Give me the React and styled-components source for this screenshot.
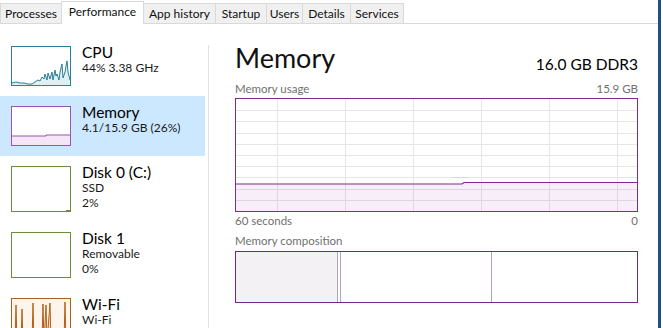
import React from "react";
import styled, { createGlobalStyle } from "styled-components";

const Global = createGlobalStyle`
  html, body { margin: 0; padding: 0; background: #fff; overflow: hidden; }
  body { font-family: Lato, "Noto Sans", "Liberation Sans", sans-serif; color: #000; }
  * { box-sizing: border-box; }
`;

const Window = styled.div`
  display: flex;
  width: 663px;
  height: 328px;
  overflow: hidden;
  background: #fff;
`;

const Main = styled.div`
  display: flex;
  flex-direction: column;
  width: 658px;
  flex-shrink: 0;
`;

const EdgeBar = styled.div`
  width: 3px;
  flex-shrink: 0;
  background: #1d4f8b;
`;

const TabBar = styled.div`
  display: flex;
  align-items: flex-end;
  height: 24px;
  border-bottom: 1px solid #d9d9d9;
  flex-shrink: 0;
`;

const Tab = styled.div`
  position: relative;
  z-index: ${(p) => (p.$active ? 1 : 0)};
  width: ${(p) => p.$w}px;
  height: ${(p) => (p.$active ? 23 : 20)}px;
  margin-right: -1px;
  margin-bottom: ${(p) => (p.$active ? -1 : 0)}px;
  padding-top: 2px;
  border: 1px solid #d9d9d9;
  border-bottom: none;
  background: ${(p) => (p.$active ? "#fff" : "#f0f0f0")};
  font-size: 12px;
  line-height: 15px;
  text-align: center;
  white-space: nowrap;
  color: #111;
`;

const Body = styled.div`
  display: flex;
  flex: 1;
  min-height: 0;
`;

const Sidebar = styled.div`
  width: 205px;
  flex-shrink: 0;
  margin-right: 3px;
  padding-top: 12px;
`;

const Divider = styled.div`
  width: 1px;
  flex-shrink: 0;
  margin-top: 21px;
  background: #e2e2e2;
`;

const Item = styled.div`
  display: flex;
  align-items: flex-start;
  gap: 11px;
  padding: 10px 0 10px 11px;
  background: ${(p) => (p.$selected ? "#cce8ff" : "transparent")};
`;

const Thumb = styled.div`
  width: 60px;
  height: ${(p) => p.$h}px;
  flex-shrink: 0;
  border: 1px solid ${(p) => p.$color};
  background: #fff;
  svg { display: block; }
`;

const ItemText = styled.div`
  display: flex;
  flex-direction: column;
  margin-top: -3.5px;
`;

const ItemTitle = styled.div`
  font-size: 15.5px;
  line-height: 18.7px;
  color: #000;
`;

const ItemSub = styled.div`
  font-size: 12px;
  line-height: 14.5px;
  color: #1a1a1a;
`;

const Detail = styled.div`
  flex: 1;
  min-width: 0;
  padding: 18px 20px 0 26px;
  display: flex;
  flex-direction: column;
`;

const Header = styled.div`
  display: flex;
  justify-content: space-between;
  align-items: flex-end;
  height: 32px;
`;

const BigTitle = styled.div`
  font-size: 27px;
  line-height: 32px;
  font-weight: 400;
  color: #111;
`;

const Spec = styled.div`
  font-size: 15.5px;
  line-height: 20px;
  color: #000;
`;

const LabelRow = styled.div`
  display: flex;
  justify-content: space-between;
  font-size: 11.5px;
  line-height: 15px;
  color: #707070;
  margin-top: ${(p) => p.$mt}px;
`;

const Graph = styled.div`
  margin-top: 2px;
  height: 114px;
  border: 1px solid #7d2a92;
  svg { display: block; }
`;

const Composition = styled.div`
  margin-top: 3px;
  height: 52px;
  display: flex;
  border: 1px solid #6e2a80;
`;

const Segment = styled.div`
  width: ${(p) => p.$w}px;
  flex: ${(p) => (p.$grow ? 1 : "none")};
  background: ${(p) => p.$bg || "#fff"};
  border-right: ${(p) => (p.$edge ? "1px solid #b3a2b8" : "none")};
`;

const cpuPts =
  "0,36 4,35 8,36 12,36 16,37 20,37 23,35 26,33 28,34 30,30 32,32 33,27 35,33 36,26 38,32 40,25 41,33 43,23 44,29 45,27 47,33 48,25 50,17 51,31 53,25 54,19 55,14 56,25 58,33";

function CpuThumb() {
  return (
    <Thumb $h={40} $color="#2c7f9a">
      <svg width="58" height="38" viewBox="0 0 58 38">
        <polygon points={`${cpuPts} 58,38 0,38`} fill="#e1eff5" />
        <polyline points={cpuPts} fill="none" stroke="#2c7f9a" strokeWidth="1" />
      </svg>
    </Thumb>
  );
}

function MemThumb() {
  return (
    <Thumb $h={40} $color="#9a55ae">
      <svg width="58" height="38" viewBox="0 0 58 38">
        <polygon points="0,29 34,29 34,28 58,28 58,38 0,38" fill="#f4e6f6" />
        <polyline points="0,29 34,29 34,28 58,28" fill="none" stroke="#9a55ae" strokeWidth="1" />
      </svg>
    </Thumb>
  );
}

function DiskThumb({ blip }) {
  return (
    <Thumb $h={46} $color="#6a8f3a">
      <svg width="58" height="44" viewBox="0 0 58 44">
        {blip && <line x1="54" y1="43.5" x2="58" y2="43.5" stroke="#6a8f3a" strokeWidth="1" />}
      </svg>
    </Thumb>
  );
}

const wifiPts =
  "0,44 3,44 4,6 5,44 9,44 10,10 11,44 14,44 16,30 18,44 20,44 21,4 22,44 25,44 28,38 30,44 31,5 32,44 34,6 35,44 38,4 39,44 43,44 46,32 48,44 52,44 53,3 54,44 58,44";

function WifiThumb() {
  return (
    <Thumb $h={46} $color="#b0601a">
      <svg width="58" height="44" viewBox="0 0 58 44">
        <rect x="0" y="0" width="58" height="44" fill="#fdf5ec" />
        <polygon points={`${wifiPts} 58,44 0,44`} fill="#f5dcc2" />
        <polyline points={wifiPts} fill="none" stroke="#b0601a" strokeWidth="1" />
      </svg>
    </Thumb>
  );
}

function UsageChart() {
  const W = 401;
  const H = 112;
  const rows = Array.from({ length: 9 }, (_, i) => ((i + 1) * H) / 10);
  const cols = [41, 109, 177, 245, 313, 381];
  const line = "0,85 226,85 228,83.5 401,83.5";
  return (
    <svg width={W} height={H} viewBox={`0 0 ${W} ${H}`}>
      {rows.map((y) => (
        <line key={`r${y}`} x1="0" x2={W} y1={Math.round(y) + 0.5} y2={Math.round(y) + 0.5} stroke="#e6e6e6" strokeWidth="1" />
      ))}
      {cols.map((x) => (
        <line key={`c${x}`} x1={x + 0.5} x2={x + 0.5} y1="0" y2={H} stroke="#e6e6e6" strokeWidth="1" />
      ))}
      <polygon points={`${line} 401,112 0,112`} fill="rgba(139,18,174,0.07)" />
      <line x1="216" y1="78.5" x2="232" y2="78.5" stroke="#d8d8d8" strokeWidth="1" />
      <polyline points={line} fill="none" stroke="#7d2a92" strokeWidth="1.2" />
    </svg>
  );
}

const tabs = [
  ["Processes", 62],
  ["Performance", 83],
  ["App history", 73],
  ["Startup", 52],
  ["Users", 37],
  ["Details", 49],
  ["Services", 54],
];

export default function App() {
  return (
    <>
      <Global />
      <Window>
        <Main>
          <TabBar>
            {tabs.map(([name, w]) => (
              <Tab key={name} $w={w} $active={name === "Performance"}>
                {name}
              </Tab>
            ))}
          </TabBar>
          <Body>
            <Sidebar>
              <Item>
                <CpuThumb />
                <ItemText>
                  <ItemTitle>CPU</ItemTitle>
                  <ItemSub>44% 3.38 GHz</ItemSub>
                </ItemText>
              </Item>
              <Item $selected>
                <MemThumb />
                <ItemText>
                  <ItemTitle>Memory</ItemTitle>
                  <ItemSub>4.1/15.9 GB (26%)</ItemSub>
                </ItemText>
              </Item>
              <Item>
                <DiskThumb blip />
                <ItemText>
                  <ItemTitle>Disk 0 (C:)</ItemTitle>
                  <ItemSub>SSD</ItemSub>
                  <ItemSub>2%</ItemSub>
                </ItemText>
              </Item>
              <Item>
                <DiskThumb />
                <ItemText>
                  <ItemTitle>Disk 1</ItemTitle>
                  <ItemSub>Removable</ItemSub>
                  <ItemSub>0%</ItemSub>
                </ItemText>
              </Item>
              <Item>
                <WifiThumb />
                <ItemText>
                  <ItemTitle>Wi-Fi</ItemTitle>
                  <ItemSub>Wi-Fi</ItemSub>
                </ItemText>
              </Item>
            </Sidebar>
            <Divider />
            <Detail>
              <Header>
                <BigTitle>Memory</BigTitle>
                <Spec>16.0 GB DDR3</Spec>
              </Header>
              <LabelRow $mt={7}>
                <span>Memory usage</span>
                <span>15.9 GB</span>
              </LabelRow>
              <Graph>
                <UsageChart />
              </Graph>
              <LabelRow $mt={1}>
                <span>60 seconds</span>
                <span>0</span>
              </LabelRow>
              <LabelRow $mt={5}>
                <span>Memory composition</span>
              </LabelRow>
              <Composition>
                <Segment $w={102} $bg="#f4f1f5" $edge />
                <Segment $w={3} $edge />
                <Segment $w={151} $edge />
                <Segment $grow />
              </Composition>
            </Detail>
          </Body>
        </Main>
        <EdgeBar />
      </Window>
    </>
  );
}
